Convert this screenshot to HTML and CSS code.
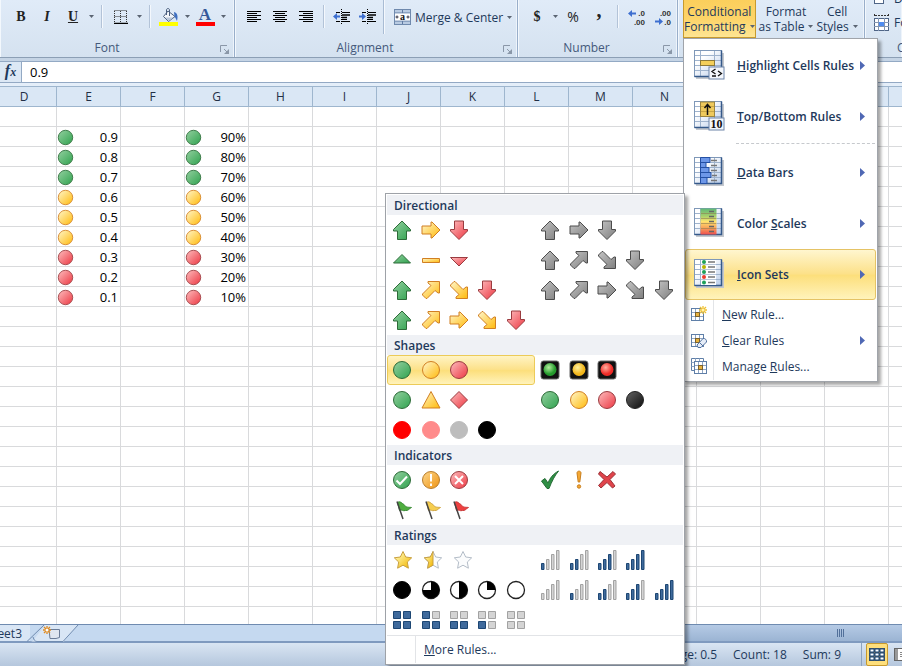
FILE: index.html
```html
<!DOCTYPE html>
<html lang="en">
<head>
<meta charset="utf-8">
<title>Workbook</title>
<link rel="stylesheet" href="styles.css">
</head>
<body>
<svg class="defs" aria-hidden="true">
  <defs>
    <linearGradient id="g-green" x1="0" y1="0" x2="1" y2="1"><stop offset="0.1" stop-color="#8acb98"/><stop offset="0.9" stop-color="#3aa757"/></linearGradient>
    <linearGradient id="g-yellow" x1="0" y1="0" x2="1" y2="1"><stop offset="0.1" stop-color="#fff0b8"/><stop offset="0.9" stop-color="#ffc01e"/></linearGradient>
    <linearGradient id="g-red" x1="0" y1="0" x2="1" y2="1"><stop offset="0.1" stop-color="#fbb0b2"/><stop offset="0.9" stop-color="#ee444e"/></linearGradient>
    <linearGradient id="g-gray" x1="0" y1="0" x2="1" y2="1"><stop offset="0.1" stop-color="#bdbdbd"/><stop offset="0.9" stop-color="#868686"/></linearGradient>
    <linearGradient id="g-black" x1="0" y1="0" x2="1" y2="1"><stop offset="0.1" stop-color="#5c5c5c"/><stop offset="0.9" stop-color="#151515"/></linearGradient>
    <linearGradient id="g-orange" x1="0" y1="0" x2="1" y2="1"><stop offset="0.1" stop-color="#fbd080"/><stop offset="0.9" stop-color="#f09a1e"/></linearGradient>
    <linearGradient id="g-star" x1="0" y1="0" x2="1" y2="1"><stop offset="0.2" stop-color="#fff3a0"/><stop offset="0.9" stop-color="#f2b90c"/></linearGradient>
    <linearGradient id="g-cell" x1="0" y1="0" x2="1" y2="1"><stop offset="0.3" stop-color="#ffffff"/><stop offset="1" stop-color="#b9cdea"/></linearGradient>
    <linearGradient id="g-scale" x1="0" y1="0" x2="0" y2="1"><stop offset="0" stop-color="#5fb878"/><stop offset="0.3" stop-color="#a9d06a"/><stop offset="0.5" stop-color="#ffe36e"/><stop offset="0.75" stop-color="#f9a25a"/><stop offset="1" stop-color="#ee4f4f"/></linearGradient>
    <radialGradient id="g-lampg" cx=".4" cy=".35"><stop offset="0" stop-color="#b5efa0"/><stop offset="1" stop-color="#249a2c"/></radialGradient>
    <radialGradient id="g-lampy" cx=".4" cy=".35"><stop offset="0" stop-color="#fff2a0"/><stop offset="1" stop-color="#f2b61a"/></radialGradient>
    <radialGradient id="g-lampr" cx=".4" cy=".35"><stop offset="0" stop-color="#ffb0a0"/><stop offset="1" stop-color="#ee2a26"/></radialGradient>
  </defs>
  <symbol id="up" viewBox="0 0 20 20"><path d="M10 1 18.5 9.5V11H14.5V19.5H5.500V11H1.500V9.500Z"/></symbol>
  <symbol id="right" viewBox="0 0 20 20"><path d="M19 10 11 18H10V14H1V6H10V2H11Z"/></symbol>
  <symbol id="down" viewBox="0 0 20 20"><path d="M10 19.500 18.500 11V9.500H14.500V1H5.500V9.500H1.500V11Z"/></symbol>
  <symbol id="upright" viewBox="0 0 20 20"><path d="M8 1.500H18.500V13H17L14 10.500 6 18.500H5L1.500 15V14L10 5.500 7 3V1.500Z"/></symbol>
  <symbol id="downright" viewBox="0 0 20 20"><path d="M8 18.500H18.500V7H17L14 9.500 6 1.500H5L1.500 5V6L10 14.500 7 17V18.500Z"/></symbol>
  <symbol id="tri-up" viewBox="0 0 20 20"><path d="M10 4.500 18.500 13H1.500Z"/></symbol>
  <symbol id="dash" viewBox="0 0 20 20"><path d="M1.500 8.500H18.500V12.500H1.500Z"/></symbol>
  <symbol id="tri-down" viewBox="0 0 20 20"><path d="M10 16 18.500 7.500H1.500Z"/></symbol>
  <symbol id="ball" viewBox="0 0 20 20"><circle cx="10" cy="10" r="8.500"/></symbol>
  <symbol id="warn" viewBox="0 0 20 20"><path d="M10 1.500 19 18H1Z"/></symbol>
  <symbol id="diamond" viewBox="0 0 20 20"><path d="M10 1.500 18.500 10 10 18.500 1.500 10Z"/></symbol>
  <symbol id="lampbox" viewBox="0 0 20 20"><rect x="1" y="1" width="18" height="18" rx="2.500" fill="#111" stroke="#666"/></symbol>
  <symbol id="flag" viewBox="0 0 20 20"><path d="M5.500 2.500C8 .5 10 3.500 12 4.500 14 8 17 7 19.500 7.500 17 8.500 16.500 11 13.500 10.500 11 11.500 9.500 9 7.500 10.500Z"/><path d="M5 1.500 11 19" fill="none" stroke="#444" stroke-width="1.500"/></symbol>
  <symbol id="check" viewBox="0 0 20 20"><path d="M1.500 11 5 8.500 8 13C10 8 13 4 18.500 1 14.500 6 12 11 9 18.500H7Z"/></symbol>
  <symbol id="bang" viewBox="0 0 20 20"><path d="M8 3C8 .5 12 .5 12 3L10.800 12H9.200Z"/><circle cx="10" cy="16.500" r="1.700"/></symbol>
  <symbol id="cross" viewBox="0 0 20 20"><path d="M3 1.500 10 7 16 1.500 18.500 4 13 9.500 18 16 15.500 18 10 12.500 4 18 1.500 15.500 7 9.500 1.500 4Z"/></symbol>
  <symbol id="ring" viewBox="0 0 20 20"><circle cx="10" cy="10" r="8.500" fill="#fff" stroke="#222" stroke-width="1.300"/></symbol>
  <symbol id="star" viewBox="0 0 20 20"><path stroke-linejoin="round" d="M10 1.500 12.700 7 18.700 7.800 14.300 12 15.400 18.200 10 15.200 4.600 18.200 5.700 12 1.300 7.800 7.300 7Z"/></symbol>
  <symbol id="halfstar" viewBox="0 0 20 20"><path stroke-linejoin="round" d="M10 1.500V15.200L4.600 18.200 5.700 12 1.300 7.800 7.300 7Z"/></symbol>
  <symbol id="bars0" viewBox="0 0 20 20"><path class="off" d="M1.500 13.500h2.500v6h-2.500zM6.500 9.500h2.500v10h-2.500zM11.500 4.500h2.500v15h-2.500zM16.500 .5h2.500v19h-2.500z"/></symbol>
  <symbol id="bars1" viewBox="0 0 20 20"><path class="on" d="M1.500 13.500h2.500v6h-2.500z"/><path class="off" d="M6.500 9.500h2.500v10h-2.500zM11.500 4.500h2.500v15h-2.500zM16.500 .5h2.500v19h-2.500z"/></symbol>
  <symbol id="bars2" viewBox="0 0 20 20"><path class="on" d="M1.500 13.500h2.500v6h-2.500zM6.500 9.500h2.500v10h-2.500z"/><path class="off" d="M11.500 4.500h2.500v15h-2.500zM16.500 .5h2.500v19h-2.500z"/></symbol>
  <symbol id="bars3" viewBox="0 0 20 20"><path class="on" d="M1.500 13.500h2.500v6h-2.500zM6.500 9.500h2.500v10h-2.500zM11.500 4.500h2.500v15h-2.500z"/><path class="off" d="M16.500 .5h2.500v19h-2.500z"/></symbol>
  <symbol id="bars4" viewBox="0 0 20 20"><path class="on" d="M1.500 13.500h2.500v6h-2.500zM6.500 9.500h2.500v10h-2.500zM11.500 4.500h2.500v15h-2.500zM16.500 .5h2.500v19h-2.500z"/></symbol>
  <symbol id="boxes4" viewBox="0 0 20 20"><path class="on" d="M1.500 1.500h7v7h-7zM11.500 1.500h7v7h-7zM1.500 11.500h7v7h-7zM11.500 11.500h7v7h-7z"/></symbol>
  <symbol id="boxes3" viewBox="0 0 20 20"><path class="on" d="M1.500 1.500h7v7h-7zM1.500 11.500h7v7h-7zM11.500 11.500h7v7h-7z"/><path class="off" d="M11.500 1.500h7v7h-7z"/></symbol>
  <symbol id="boxes2" viewBox="0 0 20 20"><path class="on" d="M1.500 11.500h7v7h-7zM11.500 11.500h7v7h-7z"/><path class="off" d="M1.500 1.500h7v7h-7zM11.500 1.500h7v7h-7z"/></symbol>
  <symbol id="boxes1" viewBox="0 0 20 20"><path class="on" d="M1.500 11.500h7v7h-7z"/><path class="off" d="M1.500 1.500h7v7h-7zM11.500 1.500h7v7h-7zM11.500 11.500h7v7h-7z"/></symbol>
  <symbol id="boxes0" viewBox="0 0 20 20"><path class="off" d="M1.500 1.500h7v7h-7zM11.500 1.500h7v7h-7zM1.500 11.500h7v7h-7zM11.500 11.500h7v7h-7z"/></symbol>
  <symbol id="launch" viewBox="0 0 9 9"><path d="M.5 7V.5H7" fill="none" stroke="#8a97a8"/><path d="M4 4l3 3" stroke="#8a97a8"/><path d="M9 4v5H4z" fill="#8a97a8"/></symbol>
  <symbol id="caret" viewBox="0 0 5 3"><path d="M0 0H5L2.500 3Z" fill="#5a6472"/></symbol>
  <symbol id="arrow" viewBox="0 0 5 9"><path d="M0 0 5 4.500 0 9Z" fill="#4f68b4"/></symbol>
  <symbol id="sheet" viewBox="0 0 32 32">
    <path d="M3 28H30V3" fill="none" stroke="#c4c8ce" stroke-width="2"/>
    <rect x="1.500" y=".5" width="27" height="26" fill="url(#g-cell)" stroke="#7f98b8"/>
    <path d="M7.500 1V26M21.500 1V26M2 5.500H28M2 10.500H28M2 15.500H28M2 20.500H28" stroke="#9fb3cd" fill="none"/>
    <path d="M1.500 26.500H28.500V.5" fill="none" stroke="#35598a" stroke-width="1.500"/>
  </symbol>
  <symbol id="mini" viewBox="0 0 16 16">
    <rect x=".5" y="2.500" width="12" height="12" fill="#fff" stroke="#5f7fa8"/>
    <path d="M1 6.500H12M1 10.500H12M4.500 3V14M8.500 3V14" stroke="#8fa6c4" fill="none"/>
    <rect x="4.500" y="6.500" width="4" height="4" fill="#e8b23c" stroke="#7a6230"/>
  </symbol>
</svg>

<header class="ribbon">
  <section class="group font">
    <div class="tools">
      <button class="tool serif bold">B</button>
      <button class="tool serif italic">I</button>
      <button class="tool serif under">U</button>
      <button class="drop" aria-label="Underline styles"><svg><use href="#caret"/></svg></button>
      <i class="sep"></i>
      <button class="tool" aria-label="Borders"><svg width="14" height="14" viewBox="0 0 14 14"><path d="M.5 .5H13M.5 6.500H13M.5 1V12M6.500 1V12M12.500 1V12" stroke="#333" stroke-dasharray="1 1" fill="none"/><path d="M0 13.500H14" stroke="#000" stroke-width="1.500"/></svg></button>
      <button class="drop" aria-label="More borders"><svg><use href="#caret"/></svg></button>
      <i class="sep"></i>
      <button class="tool" aria-label="Fill color"><svg width="20" height="18" viewBox="0 0 20 18"><path d="M9 3 16 8.500 9.500 13.500 4.500 8.500Z" fill="#f2f5f9" stroke="#4b5f7e"/><path d="M6 9.500H14.500L9.500 13Z" fill="#b8c6d8"/><path d="M7.500 7V2C7.500 0 10.500 0 10.500 2V8" fill="none" stroke="#4b5f7e"/><path d="M15 4C19 5 19 9 18 13 17 11 16.500 10 15.500 8.500Z" fill="#3e6fc0"/><path d="M0 14H19V18H0Z" fill="#ff0"/></svg></button>
      <button class="drop" aria-label="More fill colors"><svg><use href="#caret"/></svg></button>
      <button class="tool serif color">A</button>
      <button class="drop" aria-label="More font colors"><svg><use href="#caret"/></svg></button>
    </div>
    <div class="caption">Font<button class="launch" aria-label="Font settings"><svg><use href="#launch"/></svg></button></div>
  </section>

  <section class="group align">
    <div class="tools">
      <button class="tool" aria-label="Align left"><svg width="14" height="12" viewBox="0 0 14 12"><path d="M0 .5H14M0 2.500H10M0 4.500H14M0 6.500H10M0 8.500H14M0 10.500H10" stroke="#000"/></svg></button>
      <button class="tool" aria-label="Center"><svg width="14" height="12" viewBox="0 0 14 12"><path d="M0 .5H14M2 2.500H12M0 4.500H14M2 6.500H12M0 8.500H14M2 10.500H12" stroke="#000"/></svg></button>
      <button class="tool" aria-label="Align right"><svg width="14" height="12" viewBox="0 0 14 12"><path d="M0 .5H14M4 2.500H14M0 4.500H14M4 6.500H14M0 8.500H14M4 10.500H14" stroke="#000"/></svg></button>
      <i class="sep tight"></i>
      <button class="tool" aria-label="Decrease indent"><svg width="18" height="16" viewBox="0 0 18 16"><path d="M3 3.500H7M9 3.500H17M9 10.500H14M3 12.500H7M9 12.500H17" stroke="#000"/><path d="M9 6H17M9 8.500H14" stroke="#000" stroke-width="1.500"/><path d="M8.500 0V16" stroke="#000" stroke-dasharray="1 1"/><path d="M0 7.500 4 4V6.500H7V8.500H4V11Z" fill="#3d6fd0"/></svg></button>
      <button class="tool" aria-label="Increase indent"><svg width="18" height="16" viewBox="0 0 18 16"><path d="M3 3.500H7M9 3.500H17M9 10.500H14M3 12.500H7M9 12.500H17" stroke="#000"/><path d="M9 6H17M9 8.500H14" stroke="#000" stroke-width="1.500"/><path d="M8.500 0V16" stroke="#000" stroke-dasharray="1 1"/><path d="M7 7.500 3 4V6.500H0V8.500H3V11Z" fill="#3d6fd0"/></svg></button>
      <i class="rule"></i>
      <button class="wide"><svg width="17" height="16" viewBox="0 0 17 16"><rect x=".5" y=".5" width="16" height="15" fill="#b9cbe2" stroke="#6f89ad"/><path d="M1 4H16M1 12H16M8.500 1V4M8.500 12V15" stroke="#5f7aa2"/><rect x="1" y="4.500" width="15" height="7" fill="#fff"/><path d="M1.500 8H4.500M12.500 8H15.500M3 6.500V9.500M14 6.500V9.500" stroke="#334"/><text x="8.500" y="11" text-anchor="middle" class="tiny">a</text></svg>Merge &amp; Center<svg class="car"><use href="#caret"/></svg></button>
    </div>
    <div class="caption">Alignment<button class="launch" aria-label="Alignment settings"><svg><use href="#launch"/></svg></button></div>
  </section>

  <section class="group number">
    <div class="tools">
      <button class="tool serif bold">$</button>
      <button class="drop" aria-label="Currencies"><svg><use href="#caret"/></svg></button>
      <button class="tool pct">%</button>
      <button class="tool serif comma">,</button>
      <i class="sep"></i>
      <button class="tool" aria-label="Increase decimal"><svg width="18" height="18" viewBox="0 0 18 18"><path d="M0 5.500 4 2V4.500H8V6.500H4V9Z" fill="#3d6fd0"/><text x="17" y="8" text-anchor="end" class="dec">.0</text><text x="17" y="17" text-anchor="end" class="dec">.00</text></svg></button>
      <button class="tool" aria-label="Decrease decimal"><svg width="18" height="18" viewBox="0 0 18 18"><path d="M9 13.500 5 10V12.500H1V14.500H5V17Z" fill="#3d6fd0"/><text x="17" y="8" text-anchor="end" class="dec">.00</text><text x="17" y="17" text-anchor="end" class="dec">.0</text></svg></button>
    </div>
    <div class="caption">Number<button class="launch" aria-label="Number settings"><svg><use href="#launch"/></svg></button></div>
  </section>

  <section class="group styles">
    <div class="bigs">
      <div class="anchor">
        <button class="big open" aria-expanded="true">Conditional<br>Formatting<svg class="car"><use href="#caret"/></svg></button>
        <div class="menu" role="menu">
          <button class="item"><svg><use href="#sheet"/><rect x="7.500" y="10.500" width="14" height="5" fill="#f4cf5a" stroke="#8d7a3a"/><rect x="16" y="17" width="15" height="12" fill="#f4f7fc" stroke="#6c84a8"/><path d="M22.500 19 19 21.500 22.500 24M19 26H23M25 21 28.500 23.500 25 26" fill="none" stroke="#111" stroke-width="1.300"/></svg><span><u>H</u>ighlight Cells Rules</span><svg class="arr"><use href="#arrow"/></svg></button>
          <button class="item"><svg><use href="#sheet"/><rect x="7.500" y="1" width="14" height="14.500" fill="#eec95c" stroke="#9c8540"/><path d="M8 5.500H21M8 10.500H21" stroke="#c9a544"/><path d="M14.500 14V4M11.500 7 14.500 3.500 17.500 7" stroke="#111" stroke-width="1.500" fill="none"/><rect x="16" y="17" width="15" height="12" fill="#f4f7fc" stroke="#6c84a8"/><text x="23.500" y="27" text-anchor="middle" class="ten">10</text></svg><span><u>T</u>op/Bottom Rules</span><svg class="arr"><use href="#arrow"/></svg></button>
          <hr>
          <button class="item"><svg><use href="#sheet"/><path d="M7.500 .5H17V5.500H13V10.500H16V15.500H18V20.500H14V26.500H7.500Z" fill="#6d97e8" stroke="#2450a4"/><path d="M8 5.500H13M8 10.500H13M8 15.500H16M8 20.500H14" stroke="#2450a4"/><path d="M18 3.500H24M18 8.500H24M18 13.500H24M19 18.500H24M18 23.500H24" stroke="#777" stroke-width="1.500"/></svg><span><u>D</u>ata Bars</span><svg class="arr"><use href="#arrow"/></svg></button>
          <button class="item"><svg><use href="#sheet"/><rect x="7.500" y=".5" width="16" height="26" fill="url(#g-scale)"/><path d="M8 5.500H23M8 10.500H23M8 15.500H23M8 20.500H23" stroke="#917f52" opacity=".6"/><path d="M16 3.500H21M16 8.500H21M16 13.500H21M16 18.500H21M16 23.500H21" stroke="#666" stroke-width="1.500"/></svg><span>Color <u>S</u>cales</span><svg class="arr"><use href="#arrow"/></svg></button>
          <button class="item active"><svg><use href="#sheet"/><rect x="8" y="1" width="15" height="25" fill="#fff"/><path d="M8 5.500H23M8 10.500H23M8 15.500H23M8 20.500H23" stroke="#b9c7da"/><circle cx="11" cy="3" r="2" fill="#1fa15a"/><circle cx="11" cy="8" r="2" fill="#b7b400"/><circle cx="11" cy="13" r="2" fill="#1fa15a"/><circle cx="11" cy="18" r="2" fill="#ee3b2e"/><circle cx="11" cy="23.500" r="2" fill="#1fa15a"/><path d="M15 3H22M15 8H22M15 13H22M15 18H22M15 23.500H22" stroke="#777" stroke-width="1.500"/></svg><span><u>I</u>con Sets</span><svg class="arr"><use href="#arrow"/></svg></button>
          <div class="minor">
            <button class="small"><svg><use href="#mini"/><path d="M12 0V8M8 4H16M9 1 15 7M15 1 9 7" stroke="#f0c030" stroke-width="1.300"/><circle cx="12" cy="4" r="1.500" fill="#fff3b0"/></svg><span><u>N</u>ew Rule...</span></button>
            <button class="small"><svg><use href="#mini"/><path d="M6 13 12 6.500C14 6 16 8 15.500 10L10 15.500H7Z" fill="#e6edf8" stroke="#4f6f9c"/><path d="M8.500 10.500 12 14" stroke="#4f6f9c"/></svg><span><u>C</u>lear Rules</span><svg class="arr"><use href="#arrow"/></svg></button>
            <button class="small"><svg viewBox="0 0 16 16"><path d="M.5 12.500V.5H12.500V3M.5 12.500H3" fill="none" stroke="#5f7fa8"/><path d="M.5 4.500H3M.5 8.500H3M4.500 .5V3M8.500 .5V3" stroke="#8fa6c4"/><rect x="3.500" y="3.500" width="12" height="12" fill="#fff" stroke="#5f7fa8"/><path d="M4 7.500H15M4 11.500H15M7.500 4V15M11.500 4V15" stroke="#8fa6c4"/><rect x="7.500" y="7.500" width="4" height="4" fill="#e8b23c" stroke="#7a6230"/></svg><span>Manage <u>R</u>ules...</span></button>
          </div>

          <div class="gallery" role="menu">
            <h3>Directional</h3>
            <div class="line">
              <button class="set" aria-label="3 arrows"><svg class="green"><use href="#up"/></svg><svg class="yellow"><use href="#right"/></svg><svg class="red"><use href="#down"/></svg></button>
              <button class="set" aria-label="3 gray arrows"><svg class="gray"><use href="#up"/></svg><svg class="gray"><use href="#right"/></svg><svg class="gray"><use href="#down"/></svg></button>
            </div>
            <div class="line">
              <button class="set" aria-label="3 triangles"><svg class="green"><use href="#tri-up"/></svg><svg class="yellow"><use href="#dash"/></svg><svg class="red"><use href="#tri-down"/></svg></button>
              <button class="set" aria-label="4 gray arrows"><svg class="gray"><use href="#up"/></svg><svg class="gray"><use href="#upright"/></svg><svg class="gray"><use href="#downright"/></svg><svg class="gray"><use href="#down"/></svg></button>
            </div>
            <div class="line">
              <button class="set" aria-label="4 arrows"><svg class="green"><use href="#up"/></svg><svg class="yellow"><use href="#upright"/></svg><svg class="yellow"><use href="#downright"/></svg><svg class="red"><use href="#down"/></svg></button>
              <button class="set" aria-label="5 gray arrows"><svg class="gray"><use href="#up"/></svg><svg class="gray"><use href="#upright"/></svg><svg class="gray"><use href="#right"/></svg><svg class="gray"><use href="#downright"/></svg><svg class="gray"><use href="#down"/></svg></button>
            </div>
            <div class="line">
              <button class="set" aria-label="5 arrows"><svg class="green"><use href="#up"/></svg><svg class="yellow"><use href="#upright"/></svg><svg class="yellow"><use href="#right"/></svg><svg class="yellow"><use href="#downright"/></svg><svg class="red"><use href="#down"/></svg></button>
            </div>
            <h3>Shapes</h3>
            <div class="line">
              <button class="set picked" aria-label="3 traffic lights"><svg class="green"><use href="#ball"/></svg><svg class="yellow"><use href="#ball"/></svg><svg class="red"><use href="#ball"/></svg></button>
              <button class="set" aria-label="3 rimmed traffic lights"><svg viewBox="0 0 20 20"><use href="#lampbox"/><circle cx="10" cy="9.500" r="6.500" fill="url(#g-lampg)"/></svg><svg viewBox="0 0 20 20"><use href="#lampbox"/><circle cx="10" cy="9.500" r="6.500" fill="url(#g-lampy)"/></svg><svg viewBox="0 0 20 20"><use href="#lampbox"/><circle cx="10" cy="9.500" r="6.500" fill="url(#g-lampr)"/></svg></button>
            </div>
            <div class="line">
              <button class="set" aria-label="3 signs"><svg class="green"><use href="#ball"/></svg><svg class="yellow"><use href="#warn"/></svg><svg class="red"><use href="#diamond"/></svg></button>
              <button class="set" aria-label="4 traffic lights"><svg class="green"><use href="#ball"/></svg><svg class="yellow"><use href="#ball"/></svg><svg class="red"><use href="#ball"/></svg><svg class="black"><use href="#ball"/></svg></button>
            </div>
            <div class="line">
              <button class="set" aria-label="Red to black"><svg fill="#f00" stroke="#f00"><use href="#ball"/></svg><svg fill="#ff8b8b" stroke="#ff8b8b"><use href="#ball"/></svg><svg fill="#bdbdbd" stroke="#bdbdbd"><use href="#ball"/></svg><svg fill="#000" stroke="#000"><use href="#ball"/></svg></button>
            </div>
            <h3>Indicators</h3>
            <div class="line">
              <button class="set" aria-label="3 circled symbols"><svg class="green" viewBox="0 0 20 20"><use href="#ball"/><path d="M4.500 10.500 8 14 15 6.500" class="mark"/></svg><svg class="orange" viewBox="0 0 20 20"><use href="#ball"/><path d="M10 4V11.500M10 13.500V16" class="mark"/></svg><svg class="red" viewBox="0 0 20 20"><use href="#ball"/><path d="M6 6 14 14M14 6 6 14" class="mark"/></svg></button>
              <button class="set" aria-label="3 symbols"><svg fill="#2f8f45" stroke="#256b35"><use href="#check"/></svg><svg fill="#f5a833" stroke="#c97f1f"><use href="#bang"/></svg><svg fill="#e0444b" stroke="#9c3237"><use href="#cross"/></svg></button>
            </div>
            <div class="line">
              <button class="set" aria-label="3 flags"><svg fill="#4fae3f" stroke="#3a8a36"><use href="#flag"/></svg><svg fill="#f6ce50" stroke="#cfa544"><use href="#flag"/></svg><svg fill="#ee4040" stroke="#c93a3a"><use href="#flag"/></svg></button>
            </div>
            <h3>Ratings</h3>
            <div class="line">
              <button class="set stars" aria-label="3 stars"><svg fill="url(#g-star)" stroke="#c9a040"><use href="#star"/></svg><svg viewBox="0 0 20 20"><g fill="#fbfcfd" stroke="#b4bdc8"><use href="#star"/></g><g fill="url(#g-star)" stroke="#c9a040"><use href="#halfstar"/></g></svg><svg fill="#fbfcfd" stroke="#b4bdc8"><use href="#star"/></svg></button>
              <button class="set" aria-label="4 ratings"><svg><use href="#bars1"/></svg><svg><use href="#bars2"/></svg><svg><use href="#bars3"/></svg><svg><use href="#bars4"/></svg></button>
            </div>
            <div class="line">
              <button class="set" aria-label="5 quarters"><svg fill="#000" stroke="#000"><use href="#ball"/></svg><svg viewBox="0 0 20 20"><use href="#ring"/><path d="M10 10V1.500A8.500 8.500 0 1 1 1.500 10Z"/></svg><svg viewBox="0 0 20 20"><use href="#ring"/><path d="M10 1.500A8.500 8.500 0 0 1 10 18.500Z"/></svg><svg viewBox="0 0 20 20"><use href="#ring"/><path d="M10 10V1.500A8.500 8.500 0 0 1 18.500 10Z"/></svg><svg><use href="#ring"/></svg></button>
              <button class="set" aria-label="5 ratings"><svg><use href="#bars0"/></svg><svg><use href="#bars1"/></svg><svg><use href="#bars2"/></svg><svg><use href="#bars3"/></svg><svg><use href="#bars4"/></svg></button>
            </div>
            <div class="line">
              <button class="set" aria-label="5 boxes"><svg><use href="#boxes4"/></svg><svg><use href="#boxes3"/></svg><svg><use href="#boxes2"/></svg><svg><use href="#boxes1"/></svg><svg><use href="#boxes0"/></svg></button>
            </div>
            <div class="more"><button><u>M</u>ore Rules...</button></div>
          </div>
        </div>
      </div>
      <button class="big">Format<br>as Table<svg class="car"><use href="#caret"/></svg></button>
      <button class="big">Cell<br>Styles<svg class="car"><use href="#caret"/></svg></button>
    </div>
    <div class="caption">Styles</div>
  </section>

  <section class="group cells">
    <div class="stack">
      <button class="wide"><svg width="17" height="16" viewBox="0 0 17 16"><rect x="1.500" y="4.500" width="9" height="9" fill="#fff" stroke="#4f6587"/></svg>Delete</button>
      <button class="wide"><svg width="17" height="17" viewBox="0 0 17 17"><rect x="1.500" y="4.500" width="14" height="12" fill="#fff" stroke="#4f6587"/><path d="M1 8.500H16M1 12.500H16M5.500 4V17M11.500 4V17" stroke="#8396b3"/><rect x="6" y="8" width="5" height="4" fill="#4f8cf0"/><path d="M2 1.500H15M1.500 0V3M15.500 0V3" stroke="#333" stroke-dasharray="2 1"/></svg>Format</button>
    </div>
    <div class="caption">Cells</div>
  </section>
</header>

<div class="formula">
  <label for="fx" class="fx">f<small>x</small></label>
  <input id="fx" type="text" value="0.9">
</div>

<main class="sheet">
  <table>
    <thead><tr><th class="first">D</th><th>E</th><th>F</th><th>G</th><th>H</th><th>I</th><th>J</th><th>K</th><th>L</th><th>M</th><th>N</th><th>O</th><th>P</th><th>Q</th><th>R</th></tr></thead>
    <tbody>
      <tr><td></td><td></td><td></td><td></td></tr>
      <tr><td></td><td><div><svg class="green"><use href="#ball"/></svg>0.9</div></td><td></td><td><div><svg class="green"><use href="#ball"/></svg>90%</div></td></tr>
      <tr><td></td><td><div><svg class="green"><use href="#ball"/></svg>0.8</div></td><td></td><td><div><svg class="green"><use href="#ball"/></svg>80%</div></td></tr>
      <tr><td></td><td><div><svg class="green"><use href="#ball"/></svg>0.7</div></td><td></td><td><div><svg class="green"><use href="#ball"/></svg>70%</div></td></tr>
      <tr><td></td><td><div><svg class="yellow"><use href="#ball"/></svg>0.6</div></td><td></td><td><div><svg class="yellow"><use href="#ball"/></svg>60%</div></td></tr>
      <tr><td></td><td><div><svg class="yellow"><use href="#ball"/></svg>0.5</div></td><td></td><td><div><svg class="yellow"><use href="#ball"/></svg>50%</div></td></tr>
      <tr><td></td><td><div><svg class="yellow"><use href="#ball"/></svg>0.4</div></td><td></td><td><div><svg class="yellow"><use href="#ball"/></svg>40%</div></td></tr>
      <tr><td></td><td><div><svg class="red"><use href="#ball"/></svg>0.3</div></td><td></td><td><div><svg class="red"><use href="#ball"/></svg>30%</div></td></tr>
      <tr><td></td><td><div><svg class="red"><use href="#ball"/></svg>0.2</div></td><td></td><td><div><svg class="red"><use href="#ball"/></svg>20%</div></td></tr>
      <tr><td></td><td><div><svg class="red"><use href="#ball"/></svg>0.1</div></td><td></td><td><div><svg class="red"><use href="#ball"/></svg>10%</div></td></tr>
    </tbody>
  </table>
</main>

<nav class="tabs">
  <button class="tab"><span>Sheet3</span></button>
  <svg class="newtab" width="52" height="17" viewBox="0 0 52 17"><path d="M0 16.500C3 16.500 4 15 5 13L15 0H48L34 16.500Z" fill="#d9e6f5"/><path d="M-3 16.500 14 0M3 12C4 15 5 16.500 7 16.500H33L48 0" fill="none" stroke="#6f8bb0"/><path d="M19 4.500H29.500V12.500L26 13.500H20Z" fill="#dfe6f0" stroke="#6a7c98"/><path d="M17 1V9M13 5H21M14 2 20 8M20 2 14 8" stroke="#e08a1e" stroke-width="1.300"/><circle cx="17" cy="5" r="1.500" fill="#fff"/></svg>
  <div class="scroll"><svg width="8" height="8" viewBox="0 0 8 8"><path d="M.5 0V8M2.500 0V8M4.500 0V8M6.500 0V8" stroke="#52709a"/></svg></div>
</nav>

<footer class="status">
  <span>Average: 0.5</span><span>Count: 18</span><span>Sum: 9</span>
  <div class="views">
    <button class="view on" aria-label="Normal view"><svg width="16" height="13" viewBox="0 0 16 13"><path d="M0 0H16V13H0Z" fill="#6a6a62"/><path d="M1 1h4v3h-4zM6 1h4v3h-4zM11 1h4v3h-4zM1 5h4v3h-4zM6 5h4v3h-4zM11 5h4v3h-4zM1 9h4v3h-4zM6 9h4v3h-4zM11 9h4v3h-4z" fill="#fff"/></svg></button>
    <button class="view" aria-label="Page layout view"><svg width="16" height="13" viewBox="0 0 16 13"><rect x=".5" y=".5" width="15" height="12" fill="#9a9a9a" stroke="#666"/><rect x="4" y="1" width="9" height="11" fill="#fff"/><path d="M6 4.500H11M6 6.500H11M6 8.500H11" stroke="#888"/></svg></button>
  </div>
</footer>
</body>
</html>
```
FILE: styles.css
```css
* { box-sizing: border-box; }
html, body { height: 100%; }
body {
  margin: 0;
  display: flex;
  flex-direction: column;
  overflow: hidden;
  font: 12px/15px "Open Sans", "Noto Sans", sans-serif;
  color: #1e395b;
  background: #fff;
}
button {
  margin: 0;
  padding: 0;
  border: 0;
  background: none;
  font: inherit;
  color: inherit;
  white-space: nowrap;
}
svg { flex: none; }
.defs { position: absolute; width: 0; height: 0; }
.green { fill: url(#g-green); stroke: #2d6b38; }
.yellow { fill: url(#g-yellow); stroke: #d17f22; }
.red { fill: url(#g-red); stroke: #9a3c40; }
.gray { fill: url(#g-gray); stroke: #4c4c4c; }
.black { fill: url(#g-black); stroke: #222; }
.orange { fill: url(#g-orange); stroke: #b97d2c; }
.mark { fill: none; stroke: #fff; stroke-width: 2; }
.on { fill: #3f6a9c; stroke: #1d4673; }
.off { fill: #d4d4d4; stroke: #a2a2a2; }

/* Ribbon */
.ribbon {
  flex: none;
  display: flex;
  height: 58px;
  border-bottom: 1px solid #8c9fb5;
  background: linear-gradient(#e0ebf8, #d5e2f0);
}
.group {
  flex: none;
  display: flex;
  flex-direction: column;
  border-right: 1px solid #98aeca;
  box-shadow: inset 1px 0 #f3f8fd, inset -1px 0 #eef4fb;
}
.font { width: 235px; padding-left: 8px; }
.align { width: 283px; padding-left: 6px; }
.number { width: 160px; padding-left: 6px; }
.styles { width: 187px; padding-left: 5px; }
.cells { flex: 1; padding-left: 8px; overflow: hidden; border-right: 0; }
.tools { display: flex; align-items: flex-start; height: 38px; padding-top: 5px; }
.tool {
  width: 26px;
  height: 23px;
  display: flex;
  align-items: center;
  justify-content: center;
  color: #222;
}
.serif { font: bold 14px/22px "Liberation Serif", serif; }
.italic { font-style: italic; }
.under { text-decoration: underline; }
.color {
  height: 21px;
  align-items: flex-start;
  font-size: 17px;
  line-height: 19px;
  color: #35589a;
  background: linear-gradient(#f00, #f00) center bottom / 19px 4px no-repeat;
}
.pct { font-size: 14px; }
.comma { font-size: 20px; line-height: 10px; align-items: flex-start; }
.drop { width: 10px; height: 23px; display: flex; align-items: center; justify-content: center; }
.drop svg, .car { width: 5px; height: 3px; }
.sep { width: 2px; height: 23px; margin: 0 5px; background: #b3c3d8; border-right: 1px solid #f4f8fd; }
.tight { margin: 0 4px; }
.rule { width: 2px; height: 34px; margin: -5px 9px 0 2px; background: #a9bcd4; border-right: 1px solid #f4f8fd; }
.wide { flex: none; height: 24px; display: flex; align-items: center; gap: 4px; }
.tiny { font: bold 10px "Liberation Serif", serif; fill: #111; }
.dec { font: bold 8px "Liberation Sans", sans-serif; fill: #333; }
.ten { font: bold 12px "Liberation Serif", serif; fill: #111; }
.caption {
  position: relative;
  height: 19px;
  padding-top: 2px;
  padding-right: 28px;
  text-align: center;
  color: #44597b;
}
.launch { position: absolute; right: 5px; bottom: 3px; width: 9px; height: 9px; display: flex; }
.launch svg { width: 9px; height: 9px; }
.bigs { display: flex; height: 38px; gap: 3px; }
.anchor { position: relative; display: flex; }
.big { padding: 0; text-align: center; line-height: 15px; height: 38px; }
.big .car { margin-left: 4px; vertical-align: 3px; }
.open { border: 1px solid #c79a2e; border-top: 0; background: linear-gradient(#fbcf5c, #fdd468 50%, #fee594); }
.stack { height: 38px; display: flex; flex-direction: column; justify-content: flex-end; padding-bottom: 4px; }
.cells .caption { text-align: left; padding: 2px 0 0 24px; }

/* Conditional formatting menu */
.menu {
  position: absolute;
  z-index: 5;
  top: 38px;
  left: 0;
  width: 195px;
  padding: 1px;
  background: #fff;
  border: 1px solid #a0a4aa;
  box-shadow: 3px 3px 3px rgba(0, 0, 0, .35);
}
.item {
  width: 100%;
  height: 51px;
  padding: 0 10px 0 7px;
  display: flex;
  align-items: center;
  gap: 12px;
  border: 1px solid transparent;
  border-radius: 3px;
  font-weight: 600;
}
.item svg { width: 32px; height: 32px; }
.item span { flex: 1; min-width: 0; text-align: left; }
.item svg.arr, .small svg.arr { width: 5px; height: 9px; margin-left: auto; }
.item svg.arr { margin-left: -12px; }
.active { border-color: #e5c365; background: linear-gradient(#fff6cf, #fce18a 48%, #fcdf7c 52%, #fff3bb); }
.menu hr { margin: 1px 1px 3px 51px; border: 0; border-top: 1px dashed #c6c9cd; height: 1px; }
.minor { padding: 1px 0; background: linear-gradient(#e2e4e7, #e2e4e7) 28px 0 / 1px 100% no-repeat; }
.small { width: 100%; height: 26px; padding: 0 11px 0 6px; display: flex; align-items: center; gap: 15px; }
.small svg { width: 16px; height: 16px; }

/* Icon set gallery */
.gallery {
  position: absolute;
  right: 192px;
  top: 154px;
  width: 300px;
  padding: 1px;
  background: #fff;
  border: 1px solid #9ea2a8;
  box-shadow: 3px 3px 3px rgba(0, 0, 0, .35);
}
.gallery h3 { height: 20px; margin: 0; padding: 1px 7px 0; font: 600 12px/20px "Open Sans", sans-serif; background: #eff1f5; }
.line { display: grid; grid-template-columns: 148px 148px; height: 30px; }
.set {
  display: grid;
  grid-template-columns: repeat(5, 1fr);
  justify-items: center;
  align-items: center;
  padding: 0 5px 0 1px;
}
.set svg { width: 20px; height: 20px; }
.stars { grid-template-columns: repeat(5, 30px); }
.picked {
  padding: 0 4px 0 0;
  border: 1px solid #eccb58;
  border-radius: 3px;
  background: linear-gradient(#fff4c4, #fce18a 48%, #fcdf7c 52%, #fff3bb);
}
.more { display: flex; padding-left: 28px; border-top: 1px solid #e2e4e7; }
.more button { padding: 6px 8px; border-left: 1px solid #e2e4e7; }

/* Formula bar */
.formula {
  flex: none;
  display: flex;
  height: 28px;
  border-top: 3px solid #c5d4e5;
  border-bottom: 3px solid #e4eef9;
}
.fx {
  width: 22px;
  background: #dce8f5;
  border: solid #93a9c4;
  border-width: 1px 1px 1px 0;
  text-align: center;
  font: italic bold 16px/18px "Liberation Serif", serif;
}
.fx small { font-size: 12px; }
.formula input {
  flex: 1;
  min-width: 0;
  padding: 0 8px;
  border: solid #93a9c4;
  border-width: 1px 0;
  font: 13px/18px "Open Sans", sans-serif;
  color: #000;
  outline: 0;
}

/* Grid */
.sheet {
  flex: 1;
  min-height: 0;
  overflow: hidden;
  background-image:
    linear-gradient(90deg, transparent 63px, #d9dadc 63px),
    linear-gradient(transparent 19px, #d9dadc 19px);
  background-size: 64px 64px, 20px 20px;
  background-position: -7px 0, 0 1px;
}
table { border-collapse: separate; border-spacing: 0; table-layout: fixed; width: 953px; }
th {
  width: 64px;
  height: 21px;
  padding: 0;
  font: 12px/19px "Open Sans", sans-serif;
  background: #dae7f5;
  border: solid #9eb6ce;
  border-width: 1px 1px 1px 0;
  color: #222f45;
}
.first { width: 57px; padding-right: 8px; }
td { height: 20px; padding: 0; font: 13px/19px "Open Sans", sans-serif; color: #000; }
td div { display: flex; align-items: center; justify-content: space-between; padding-right: 3px; }
td svg { width: 17px; height: 17px; }

/* Sheet tabs and status bar */
.tabs {
  flex: none;
  display: flex;
  height: 19px;
  border-top: 1px solid #6f8bb0;
  border-bottom: 2px solid #7f9abf;
  background: #c5d9f0;
}
.tab { width: 30px; background: #d9e6f5; display: flex; justify-content: flex-end; align-items: flex-end; padding-right: 8px; overflow: hidden; }
.newtab { overflow: visible; }
.scroll {
  flex: 1;
  max-width: 480px;
  margin-left: auto;
  padding-left: 415px;
  display: flex;
  align-items: center;
  background: linear-gradient(#b5cae5, #9bb4d3);
}
.status {
  flex: none;
  display: flex;
  align-items: center;
  justify-content: flex-end;
  gap: 16px;
  height: 23px;
  padding-left: 16px;
  background: linear-gradient(#d9e5f3, #b5c7dd);
}
.views { display: flex; gap: 3px; margin: 0 -11px 0 4px; padding-left: 4px; border-left: 1px solid #8da3bf; }
.view { width: 22px; height: 23px; display: flex; align-items: center; justify-content: center; }
.view.on { border: 1px solid #c79a2e; border-radius: 2px; background: #fedf7c; }
```
